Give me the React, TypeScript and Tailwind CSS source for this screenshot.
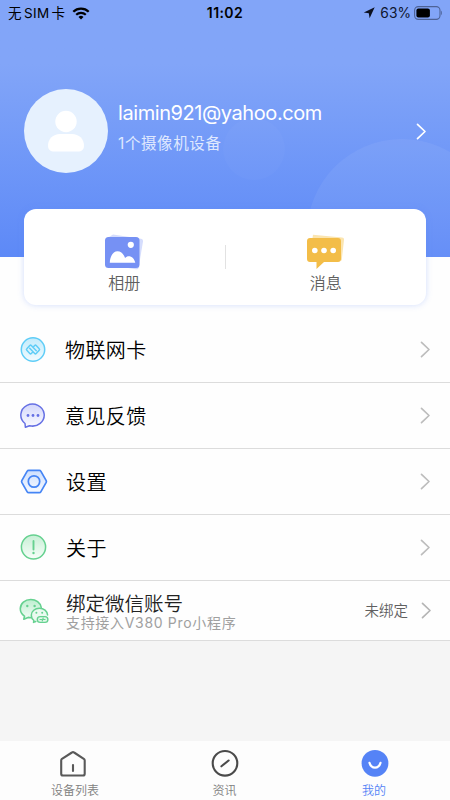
import type { ReactNode } from 'react'

type MenuItem = { id: string; label: string; icon: ReactNode; indent: string }

const IotIcon = () => (
  <svg width="26" height="26" viewBox="0 0 26 26" fill="none">
    <defs>
      <linearGradient id="iot" x1="0" y1="0" x2="0" y2="1">
        <stop offset="0" stopColor="#c3ebfb" />
        <stop offset="1" stopColor="#f1fbff" />
      </linearGradient>
    </defs>
    <circle cx="13" cy="12.5" r="11.7" fill="url(#iot)" stroke="#5fcdf7" strokeWidth="1.5" />
    <g stroke="#5fcdf7" strokeWidth="1.5" strokeLinecap="round" strokeLinejoin="round">
      <path d="M12.300 15.500l-1 1c-.5.500-1 .5-1.500 0l-3-3.200c-.5-.5-.5-1.100 0-1.600l3-3.200c.5-.5 1-.5 1.500 0l5 5.200" />
      <path d="M13.700 9.500l1-1c.5-.5 1-.5 1.500 0l3 3.200c.5.500.5 1.100 0 1.600l-3 3.200c-.5.500-1 .5-1.500 0l-5-5.200" />
    </g>
  </svg>
)

const FeedbackIcon = () => (
  <svg width="26" height="26" viewBox="0 0 26 26" fill="none">
    <defs>
      <linearGradient id="fb" x1="0" y1="0" x2="0" y2="1">
        <stop offset="0" stopColor="#d3d7fb" />
        <stop offset="1" stopColor="#fbfbff" />
      </linearGradient>
    </defs>
    <path d="M5 20.500A11.700 11 0 1 1 9.500 22.700L5.400 24.300z" fill="url(#fb)" stroke="#6670e4" strokeWidth="1.500" strokeLinejoin="round" />
    <circle cx="8" cy="12.500" r="1.400" fill="#6670e4" />
    <circle cx="13" cy="12.500" r="1.400" fill="#6670e4" />
    <circle cx="18" cy="12.500" r="1.400" fill="#6670e4" />
  </svg>
)

const SettingsIcon = () => (
  <svg width="28" height="26" viewBox="0 0 28 26" fill="none" className="ml-px">
    <defs>
      <linearGradient id="set" x1="0" y1="0" x2="0" y2="1">
        <stop offset="0" stopColor="#cddffe" />
        <stop offset="1" stopColor="#f7faff" />
      </linearGradient>
    </defs>
    <path d="M8.800 1.300h10.400c.7 0 1.300.3 1.600.9l5.400 9.400c.3.600.3 1.200 0 1.800l-5.400 9.400c-.3.600-.9.900-1.600.9H8.800c-.7 0-1.300-.3-1.600-.9l-5.400-9.400c-.3-.6-.3-1.200 0-1.800l5.400-9.400c.3-.6.9-.9 1.600-.9z" fill="url(#set)" stroke="#4585f5" strokeWidth="1.700" />
    <circle cx="14" cy="12.500" r="5.700" stroke="#4585f5" strokeWidth="1.700" />
  </svg>
)

const AboutIcon = () => (
  <svg width="27" height="27" viewBox="0 0 27 27" fill="none">
    <defs>
      <linearGradient id="about" x1="0" y1="0" x2="0" y2="1">
        <stop offset="0" stopColor="#c6efd5" />
        <stop offset="1" stopColor="#f8fefa" />
      </linearGradient>
    </defs>
    <circle cx="13.500" cy="13" r="12.100" fill="url(#about)" stroke="#66d190" strokeWidth="1.500" />
    <path d="M13.500 7v8.500" stroke="#66d190" strokeWidth="1.900" strokeLinecap="round" />
    <circle cx="13.500" cy="19" r="1.200" fill="#66d190" />
  </svg>
)

const WechatIcon = () => (
  <svg width="30" height="26" viewBox="0 0 30 26" fill="none" className="ml-0.5">
    <defs>
      <linearGradient id="wx" x1="0" y1="0" x2="0" y2="1">
        <stop offset="0" stopColor="#bdeecf" />
        <stop offset="1" stopColor="#f4fdf7" />
      </linearGradient>
    </defs>
    <path d="M5.500 17.800C2.900 16.100 1.300 13.500 1.300 10.500 1.300 5.200 6 1.500 11.800 1.500c5.600 0 10 3.100 10.500 8l-5 9-7.300.9-4.500 1.500z" fill="url(#wx)" />
    <path d="M22.200 9.300C21.300 4.700 17 1.500 11.800 1.500 6 1.500 1.300 5.500 1.300 10.800c0 3 1.600 5.700 4.200 7.400l-.7 3 4.300-1.800c1 .2 2 .3 3 .2" stroke="#66d190" strokeWidth="1.600" strokeLinecap="round" strokeLinejoin="round" />
    <path d="M28.400 17.500c0-4.300-3.500-7.300-8-7.300s-8.100 3-8.100 7c0 3.600 2.700 6.300 6.200 6.800h3z" fill="#eafaf0" />
    <path d="M28.600 17c-.3-3.900-3.800-6.800-8.200-6.800s-8.100 3-8.100 7c0 2.200 1 4.100 2.600 5.300l-.4 1.900 2.300-.9" stroke="#66d190" strokeWidth="1.500" strokeLinecap="round" strokeLinejoin="round" />
    <circle cx="8.300" cy="8" r="1.200" fill="#66d190" />
    <circle cx="15.600" cy="8" r="1.200" fill="#66d190" />
    <circle cx="17.400" cy="14.800" r="1" fill="#66d190" />
    <circle cx="23.200" cy="14.800" r="1" fill="#66d190" />
    <rect x="18.300" y="18.600" width="10.600" height="5.800" rx="2.900" fill="#e2f8ea" stroke="#66d190" strokeWidth="1.400" />
    <path d="M21 21.500h1.600M24.600 21.500h1.500M24.200 20l-1 3" stroke="#66d190" strokeWidth="1.100" strokeLinecap="round" />
  </svg>
)

const Chevron = ({ className }: { className: string }) => (
  <svg width="11" height="17" viewBox="0 0 11 17" fill="none" className={className}>
    <path d="M1.500 1.300L9 8.500l-7.500 7.200" stroke="currentColor" strokeWidth="1.700" strokeLinecap="round" strokeLinejoin="round" />
  </svg>
)

const MENU: MenuItem[] = [
  { id: 'iot',      label: '物联网卡', icon: <IotIcon />,      indent: '-ml-px' },
  { id: 'feedback', label: '意见反馈', icon: <FeedbackIcon />, indent: '-ml-px' },
  { id: 'settings', label: '设置',     icon: <SettingsIcon />, indent: 'ml-0' },
  { id: 'about',    label: '关于',     icon: <AboutIcon />,    indent: 'ml-0' },
]

function StatusBar() {
  return (
    <div className="grid h-[26px] grid-cols-3 items-center pl-2 pr-2 text-black">
      <div className="flex items-center">
        <span className="text-[13.5px] leading-5 tracking-[0.4px] whitespace-nowrap">无<span className="mx-0.5">SIM</span>卡</span>
        <svg width="18" height="13" viewBox="0 0 18 13" fill="none" className="ml-1.5">
          <path d="M1.300 4.700a11 11 0 0 1 15.400 0" stroke="#000" strokeWidth="2.300" />
          <path d="M4.200 7.700a7 7 0 0 1 9.600 0" stroke="#000" strokeWidth="2.200" />
          <path d="M9 12.600L6.500 10a3.600 3.600 0 0 1 5 0z" fill="#000" />
        </svg>
      </div>
      <span className="text-center text-[14px] leading-5 font-semibold tracking-[0.4px]">11:02</span>
      <div className="flex items-center justify-end">
        <svg width="12" height="12" viewBox="0 0 12 12" className="mr-[5px]">
          <path d="M11.700.3L.8 5.500l5 .8.8 5z" fill="#0c1020" />
        </svg>
        <span className="mr-[3px] text-[13.8px] leading-5 text-[#0f1630]">63%</span>
        <svg width="28" height="14" viewBox="0 0 28 14" fill="none">
          <rect x=".6" y=".6" width="25.400" height="12.800" rx="3.800" stroke="#4d6296" strokeWidth="1.100" />
          <rect x="2.400" y="2.500" width="13.500" height="9" rx="2" fill="#000" />
          <path d="M27 4.800c1.100.6 1.100 3.800 0 4.400z" fill="#4d6296" />
        </svg>
      </div>
    </div>
  )
}

function Header() {
  return (
    <header className="relative h-[257px] shrink-0 overflow-hidden bg-linear-to-b from-[#82a5f8] from-25% to-[#5d89f7]">
      <svg width="450" height="257" className="absolute inset-0" fill="none">
        <circle cx="254" cy="149" r="31" fill="#fff" fillOpacity="0.025" />
        <circle cx="402" cy="234" r="95" fill="#fff" fillOpacity="0.060" />
      </svg>
      <div className="relative">
        <StatusBar />
        <div className="mt-[63px] flex h-[84px] items-center pl-6 pr-[23px]">
          <div className="flex size-[84px] shrink-0 items-center justify-center rounded-full bg-[#e6f1fe]">
            <svg width="38" height="42" viewBox="0 0 38 42" fill="#fff">
              <circle cx="19" cy="11.500" r="10.700" />
              <path d="M13 24h12c7 0 12 5 12 11.500 0 4-2.500 6-6 6H7c-3.500 0-6-2-6-6C1 29 6 24 13 24z" />
            </svg>
          </div>
          <div className="ml-2.5 flex-1 text-white">
            <p className="-mt-[10px] text-[20px] leading-7 tracking-[-0.43px]">laimin921@yahoo.com</p>
            <p className="mt-[7px] text-[15.5px] leading-5 tracking-[0.6px] text-[#dfe8fe]">1个摄像机设备</p>
          </div>
          <Chevron className="text-white" />
        </div>
      </div>
    </header>
  )
}

function QuickCard() {
  return (
    <section className="relative mx-6 -mt-12 flex h-24 shrink-0 items-center rounded-[12px] bg-white shadow-[0_0_6px_rgba(93,137,247,0.28)]">
      <div className="flex flex-1 flex-col items-center pt-[14px]">
        <svg width="40" height="37" viewBox="0 0 40 37">
          <path d="M9 .5l28 4.200c1.500.3 2.200 1.300 2 2.700l-4.300 25.900c-.3 1.500-1.300 2.200-2.700 2L5 31V3z" fill="#d5ddfd" />
          <rect x="1" y="3" width="34.500" height="31" rx="3.500" fill="#7691f4" />
          <circle cx="26.800" cy="10.800" r="3.100" fill="#fff" />
          <path d="M5.800 28.800c0-6 3.300-11.500 7.700-11.500 3.600 0 6.200 3 7.600 6.700 1-1.200 2.300-1.700 3.600-1.700 3.200 0 5.800 2.700 6.600 6.500z" fill="#fff" />
        </svg>
        <span className="text-[16px] leading-6 font-[350] text-[#606060]">相册</span>
      </div>
      <div className="h-6 w-px bg-[#e2e2e2]" />
      <div className="flex flex-1 flex-col items-center pt-[14px]">
        <svg width="40" height="37" viewBox="0 0 40 37">
          <path d="M7 .8l29 2.700c1.500.2 2.200 1 2 2.400l-2.300 20.600L4 20z" fill="#fbe5b0" />
          <path d="M4 4h28c1.800 0 3 1.200 3 3v18c0 1.800-1.200 3-3 3H18l-7.500 7V28H4c-1.800 0-3-1.200-3-3V7c0-1.800 1.200-3 3-3z" fill="#f3bd48" />
          <circle cx="8.800" cy="16.500" r="2.800" fill="#fff" />
          <circle cx="18" cy="16.500" r="2.800" fill="#fff" />
          <circle cx="27.200" cy="16.500" r="2.800" fill="#fff" />
        </svg>
        <span className="text-[16px] leading-6 font-[350] text-[#606060]">消息</span>
      </div>
    </section>
  )
}

function TabBar() {
  return (
    <nav className="grid h-[59px] shrink-0 grid-cols-3 bg-[#fdfdfd] pt-2 text-[12px] leading-4 font-[350] text-[#808080]">
      <div className="flex flex-col items-center">
        <svg width="28" height="28" viewBox="0 0 28 28" fill="none" stroke="#595959" strokeWidth="2.100" strokeLinejoin="round" strokeLinecap="round" className="-ml-1">
          <path d="M2.200 11.400c0-.7.300-1.200.8-1.600l9.900-6.300c.7-.5 1.500-.5 2.200 0l9.700 6.300c.6.400.9.900.9 1.600v13.300c0 1.100-.7 1.800-1.800 1.800H4c-1.100 0-1.800-.7-1.800-1.800z" />
          <path d="M14 16v6" />
        </svg>
        <span className="mt-[6px]">设备列表</span>
      </div>
      <div className="flex flex-col items-center">
        <svg width="28" height="28" viewBox="0 0 28 28" fill="none" stroke="#4a4a4a" strokeWidth="2.100" strokeLinecap="round" className="-ml-px">
          <circle cx="14" cy="14.300" r="12.300" />
          <path d="M10.400 17.300l7.200-5.800" />
        </svg>
        <span className="mt-[6px] -ml-px">资讯</span>
      </div>
      <div className="flex flex-col items-center text-[#5583f6]">
        <svg width="28" height="28" viewBox="0 0 28 28" fill="none" className="-ml-px">
          <circle cx="14" cy="14.300" r="13.400" fill="#5583f6" />
          <path d="M8.500 13.900c.9 3 2.900 4.700 5.500 4.700s4.600-1.700 5.500-4.700" stroke="#fff" strokeWidth="2.200" strokeLinecap="round" />
        </svg>
        <span className="mt-[6px] -ml-0.5">我的</span>
      </div>
    </nav>
  )
}

export default function App() {
  return (
    <main className="flex h-[800px] w-[450px] flex-col overflow-hidden bg-[#f5f5f5] font-[Inter,'Noto_Sans_CJK_SC',sans-serif]">
      <Header />
      <div className="flex shrink-0 flex-col bg-[#fefefe]">
        <QuickCard />
        <ul className="mt-3">
          {MENU.map(m => (
            <li key={m.id} className="flex h-[66px] items-center border-b border-[#dcdcdc] pr-[19px]">
              <span className="flex w-[66px] shrink-0 justify-center">{m.icon}</span>
              <span className={`flex-1 pt-0.5 text-[20px] leading-7 font-[350] tracking-[0.4px] text-black ${m.indent}`}>{m.label}</span>
              <Chevron className="text-[#bdbdbd]" />
            </li>
          ))}
          <li className="flex h-[60px] items-center border-b border-[#dcdcdc] pr-[18px]">
            <span className="flex w-[66px] shrink-0 justify-center">
              <WechatIcon />
            </span>
            <div className="flex-1 pt-px">
              <p className="text-[19.5px] leading-6 font-[350] text-[#222]">绑定微信账号</p>
              <p className="-mt-px text-[14px] leading-4 tracking-[0.68px] text-[#a0a0a0]">支持接入V380 Pro小程序</p>
            </div>
            <span className="mr-[13px] text-[14.5px] leading-5 font-[350] text-[#606060]">未绑定</span>
            <Chevron className="text-[#b5b5b5]" />
          </li>
        </ul>
      </div>
      <div className="flex-1" />
      <TabBar />
    </main>
  )
}
